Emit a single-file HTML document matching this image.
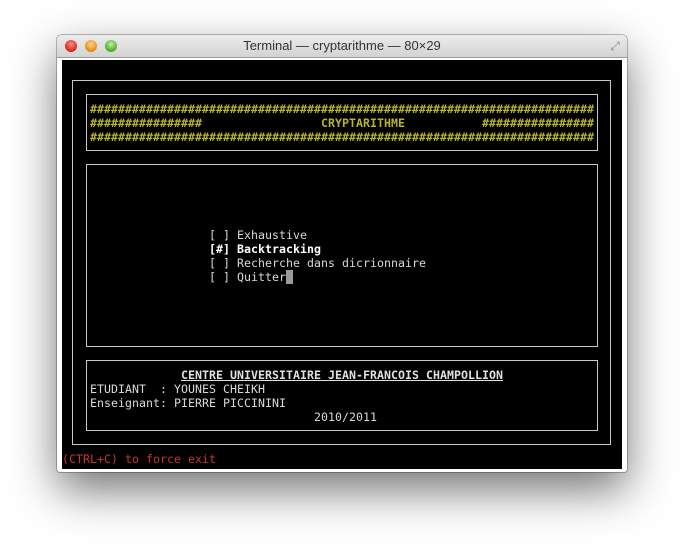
<!DOCTYPE html>
<html><head><meta charset="utf-8"><style>
body{margin:0;width:684px;height:550px;background:#fff;position:relative;overflow:hidden;font-family:"Liberation Sans",sans-serif}
.win{position:absolute;left:57px;top:35px;width:570px;height:437px;border-radius:5px 5px 3px 3px;box-shadow:0 18px 45px rgba(0,0,0,0.55),0 0 0 1px rgba(0,0,0,0.25);background:#fff}
.tb{position:absolute;left:0;top:0;width:570px;height:22px;border-radius:5px 5px 0 0;background:linear-gradient(#ececec,#d3d3d3);border-bottom:1px solid #9a9a9a;text-align:center;font-size:13px;line-height:22px;color:#333}
.b{position:absolute;top:5px;width:12px;height:12px;border-radius:50%}
.term{position:absolute;left:62px;top:60px;width:560px;height:409px;background:#000}
.t{position:absolute;font-family:"DejaVu Sans Mono","Liberation Mono",monospace;font-size:11.6px;line-height:14px;white-space:pre;color:#d8d8d8;letter-spacing:0.02px}
.y{color:#b7b32a;font-weight:bold}
.w{color:#fff;font-weight:bold}
.r{color:#c8372d}
.bx{position:absolute;border:1px solid #c8c8c8}
</style></head><body>
<div class="win">
<div class="tb">Terminal — cryptarithme — 80×29
<div class="b" style="left:8px;background:radial-gradient(circle at 50% 35%,#ff8a80,#d1261c 70%);"></div>
<div class="b" style="left:28px;background:radial-gradient(circle at 50% 35%,#ffd28a,#e48a14 70%);"></div>
<div class="b" style="left:48px;background:radial-gradient(circle at 50% 35%,#b8f59a,#4ea82a 70%);"></div>
<div style="position:absolute;right:6px;top:5px;width:12px;height:12px;color:#888;font-size:12px;line-height:12px">⤢</div>
</div>
</div>
<div class="term"></div>
<div class="bx" style="left:72px;top:80px;width:537px;height:363px"></div>
<div class="bx" style="left:86px;top:94px;width:510px;height:55px"></div>
<div class="bx" style="left:86px;top:164px;width:510px;height:181px"></div>
<div class="bx" style="left:86px;top:360px;width:510px;height:69px"></div>
<div class="t y" style="left:90px;top:102px">########################################################################</div>
<div class="t y" style="left:90px;top:116px">################                 CRYPTARITHME           ################</div>
<div class="t y" style="left:90px;top:130px">########################################################################</div>
<div class="t" style="left:209px;top:228px">[ ] Exhaustive</div>
<div class="t w" style="left:209px;top:242px">[#] Backtracking</div>
<div class="t" style="left:209px;top:256px">[ ] Recherche dans dicrionnaire</div>
<div class="t" style="left:209px;top:270px">[ ] Quitter</div>
<div style="position:absolute;left:286px;top:270px;width:7px;height:14px;background:#9a9a9a"></div>
<div class="t w" style="left:181px;top:368px;text-decoration:underline;color:#e0e0e0">CENTRE UNIVERSITAIRE JEAN-FRANCOIS CHAMPOLLION</div>
<div class="t" style="left:90px;top:382px">ETUDIANT  : YOUNES CHEIKH</div>
<div class="t" style="left:90px;top:396px">Enseignant: PIERRE PICCININI</div>
<div class="t" style="left:314px;top:410px">2010/2011</div>
<div class="t r" style="left:62px;top:452px">(CTRL+C) to force exit</div>
</body></html>
